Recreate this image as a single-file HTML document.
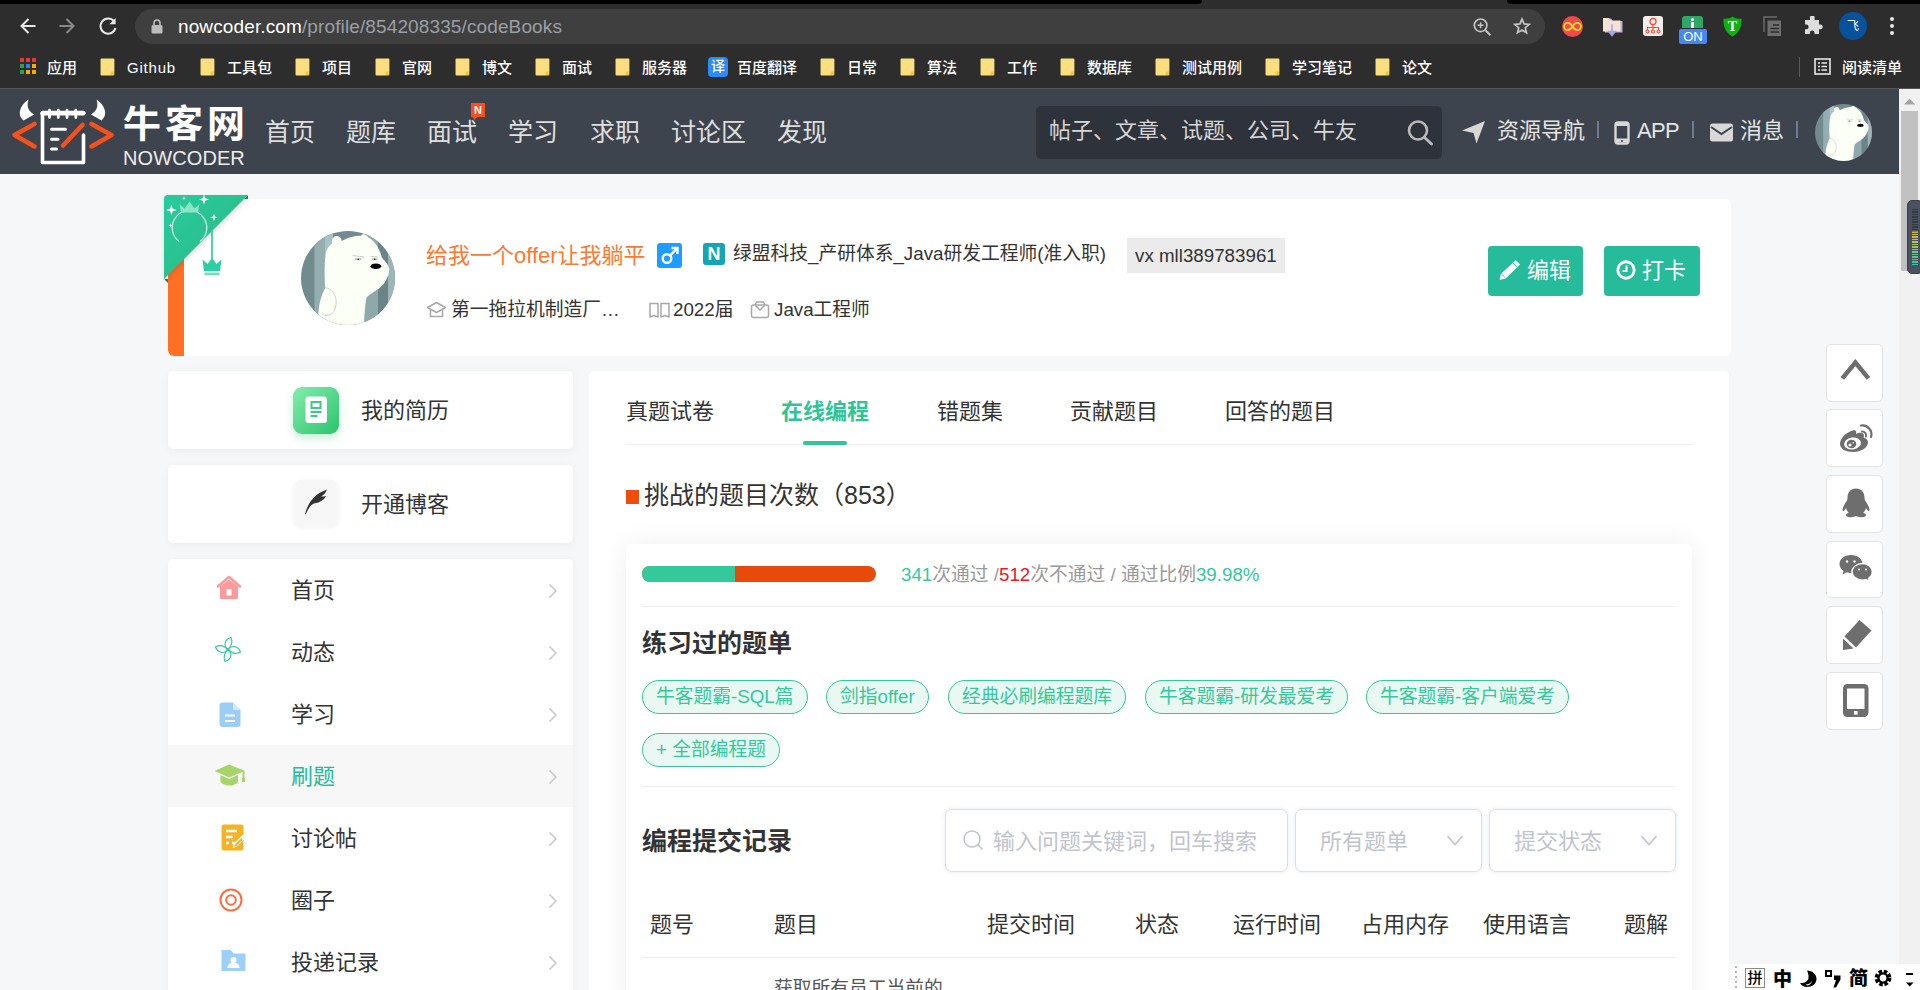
<!DOCTYPE html>
<html lang="zh-CN">
<head>
<meta charset="utf-8">
<title>牛客网</title>
<style>
*{box-sizing:border-box;margin:0;padding:0}
html,body{width:1920px;height:990px;overflow:hidden;background:#f6f7f9;
  font-family:"Liberation Sans","Noto Sans CJK SC",sans-serif;color:#333}
.abs{position:absolute}
.t{position:absolute;white-space:nowrap;line-height:1}
/* ---------- browser chrome ---------- */
#chrome{position:absolute;left:0;top:0;width:1920px;height:89px;background:#2d2d2d}
#chrome .strip{position:absolute;top:0;height:4px;background:#000}
#urlbar{position:absolute;left:135px;top:9px;width:1410px;height:35px;border-radius:18px;background:#3f3f3f}
.bm{position:absolute;top:59px;font-size:15px;color:#fff;line-height:18px;white-space:nowrap;font-weight:500}
.fold{position:absolute;top:58px;width:16px;height:18px}
/* ---------- site header ---------- */
#hdr{position:absolute;left:0;top:89px;width:1899px;height:85px;background:#3e444d}
#hdr .nav{position:absolute;top:28px;font-size:25px;line-height:30px;color:#dedede;white-space:nowrap}
#search{position:absolute;left:1036px;top:17px;width:406px;height:53px;border-radius:5px;background:#2d323b}
/* ---------- profile card ---------- */
#pcard{position:absolute;left:168px;top:199px;width:1563px;height:157px;background:#fff;border-radius:5px}
.ptxt{position:absolute;white-space:nowrap;font-size:18.75px;line-height:24px;color:#333}
.pbtn{position:absolute;top:246px;height:50px;border-radius:4px;background:#25bb9b;color:#fff;font-size:22px;line-height:50px;white-space:nowrap}
/* ---------- sidebar ---------- */
.scard{position:absolute;left:168px;width:405px;background:#fff;border-radius:5px;box-shadow:0 2px 10px rgba(0,0,0,.05)}
.stxt{position:absolute;white-space:nowrap;font-size:22px;line-height:28px;color:#333}
.chev{position:absolute;left:548px;width:10px;height:16px}
/* ---------- main ---------- */
#main{position:absolute;left:589px;top:371px;width:1140px;height:640px;background:#fff;border-radius:5px}
.tab{position:absolute;top:398px;font-size:22px;line-height:28px;color:#333;white-space:nowrap}
#inner{position:absolute;left:626px;top:544px;width:1066px;height:470px;background:#fff;border-radius:5px;box-shadow:0 0 26px rgba(0,0,0,.07)}
.tag{position:absolute;height:34px;border:1px solid #34c99a;border-radius:17px;background:#e9f8f3;color:#34c99a;font-size:18.75px;line-height:31px;padding:0 13px;white-space:nowrap}
.hline{position:absolute;height:1px;background:#eeeeee}
.inp{position:absolute;top:809px;height:63px;border:1px solid #dcdfe6;border-radius:7px;background:#fff;box-shadow:0 0 5px rgba(170,180,205,.28)}
.ph{position:absolute;top:828px;font-size:22px;line-height:28px;color:#c0c4cc;white-space:nowrap}
.th{position:absolute;top:911px;font-size:22px;line-height:28px;color:#333;white-space:nowrap}
.fbox{position:absolute;left:1826px;width:57px;height:57px;background:#fff;border:1px solid #e3e3e3;border-radius:5px}
/* ---------- scrollbar ---------- */
#sb{position:absolute;left:1899px;top:89px;width:21px;height:901px;background:#f1f1f1}
</style>
</head>
<body>
<svg width="0" height="0" style="position:absolute">
  <defs>
    <clipPath id="bc"><circle cx="47" cy="47" r="47"/></clipPath>
    <symbol id="bear" viewBox="0 0 94 94">
      <g clip-path="url(#bc)">
        <rect width="94" height="94" fill="#718b8e"/>
        <rect x="13.500" y="0" width="11" height="94" fill="#93adb1"/>
        <rect x="24" y="0" width="8" height="94" fill="#a9c2c4"/>
        <rect x="63" y="0" width="14" height="94" fill="#8fa8ac"/>
        <rect x="77" y="0" width="10" height="94" fill="#6b8487"/>
        <rect x="87" y="0" width="7" height="94" fill="#9db5b8"/>
        <g transform="scale(0.13134) translate(-160,-158)">
          <path d="M400 250C385 215 420 185 450 200C465 210 470 225 470 235C520 205 580 195 615 195C625 178 655 178 670 205C720 230 760 290 775 360C800 390 835 420 832 455C830 500 800 560 760 590C720 620 680 640 660 665C650 720 645 800 640 880L280 880L300 720C310 660 335 610 345 590C335 500 340 380 350 320C360 290 380 265 400 250Z" fill="#fbfff5"/>
          <path d="M345 590C420 600 450 700 410 770C390 800 350 810 320 790" fill="#fbfff5" stroke="#7f8f8a" stroke-width="3"/>
          <path d="M660 665C650 720 645 800 640 850" fill="none" stroke="#8a9a95" stroke-width="3"/>
          <ellipse cx="730" cy="426" rx="41" ry="21" fill="#050505"/>
          <path d="M552 344L640 356M690 352L748 356" stroke="#9aa39c" stroke-width="4"/>
          <path d="M570 372h50M700 372h40" stroke="#555" stroke-width="5"/>
          <circle cx="596" cy="373" r="6" fill="#222"/><circle cx="722" cy="373" r="6" fill="#222"/>
        </g>
      </g>
    </symbol>
  </defs>
</svg>
<!-- ================= BROWSER CHROME ================= -->
<div id="chrome">
  <div class="strip" style="left:0;width:1202px;border-bottom-right-radius:4px"></div>
  <div class="strip" style="left:1507px;width:413px;border-bottom-left-radius:4px"></div>
  <div id="urlbar"></div>
  <!-- nav arrows -->
  <svg class="abs" style="left:18px;top:16px" width="20" height="20" viewBox="0 0 20 20"><path d="M17.500 10H3.500M10.500 3L3.500 10l7 7" fill="none" stroke="#e8e8e8" stroke-width="2"/></svg>
  <svg class="abs" style="left:57px;top:16px" width="20" height="20" viewBox="0 0 20 20"><path d="M2.500 10h14M9.500 3l7 7-7 7" fill="none" stroke="#8a8a8a" stroke-width="2"/></svg>
  <svg class="abs" style="left:97px;top:15px" width="22" height="22" viewBox="0 0 22 22"><path d="M17 6.2A7.6 7.6 0 1 0 18.5 13" fill="none" stroke="#e8e8e8" stroke-width="2"/><path d="M18.6 3v6.2h-6.2z" fill="#e8e8e8"/></svg>
  <!-- lock -->
  <svg class="abs" style="left:151px;top:19px" width="12" height="15" viewBox="0 0 12 15"><rect x="0.5" y="6" width="11" height="8.5" rx="1.5" fill="#bdbdbd"/><path d="M3 6V4a3 3 0 0 1 6 0v2" fill="none" stroke="#bdbdbd" stroke-width="1.6"/></svg>
  <div class="t" style="left:178px;top:15px;font-size:19px;line-height:23px;color:#fff;letter-spacing:0.12px">nowcoder.com<span style="color:#9aa0a6">/profile/854208335/codeBooks</span></div>
  <!-- toolbar right icons -->
  <svg class="abs" style="left:1470px;top:15px" width="24" height="24" viewBox="0 0 24 24"><circle cx="10.6" cy="10.3" r="6.3" fill="none" stroke="#c4c4c4" stroke-width="1.7"/><path d="M15.2 15l5.2 5.2" stroke="#c4c4c4" stroke-width="2"/><path d="M7.6 10.3h6M10.6 7.3v6" stroke="#c4c4c4" stroke-width="1.5"/></svg>
  <svg class="abs" style="left:1513px;top:17px" width="18" height="18" viewBox="0 0 22 22"><path d="M11 2.6l2.5 5.9 6.3.5-4.8 4.1 1.5 6.2L11 16l-5.5 3.3L7 13.100 2.200 9l6.300-.5z" fill="none" stroke="#c4c4c4" stroke-width="2.100" stroke-linejoin="miter"/></svg>
  <div class="abs" style="left:1562px;top:16px;width:21px;height:21px;border-radius:50%;background:#f24a4a"></div>
  <svg class="abs" style="left:1562px;top:16px" width="21" height="21" viewBox="0 0 21 21"><path d="M10.500 10.500C9 8 7.500 6.800 5.800 6.800a3.700 3.700 0 0 0 0 7.400C7.500 14.200 9 13 10.500 10.500S13.500 6.800 15.200 6.800a3.700 3.700 0 0 1 0 7.400C13.500 14.200 12 13 10.500 10.500z" fill="none" stroke="#ffe21f" stroke-width="1.700"/></svg>
  <svg class="abs" style="left:1602px;top:15px" width="22" height="23" viewBox="0 0 22 23"><path d="M3 3.500h6l2 2.500h9.500v11.500H3z" fill="#c3a9cc"/><path d="M1 3h6l2 2.500h9.500v11H1z" fill="#f3e3d6"/><path d="M10 9.500v10M6.800 16.500l3.200 4 3.200-4z" fill="#a8a6e0" stroke="#a8a6e0" stroke-width="1.600"/></svg>
  <div class="abs" style="left:1643px;top:16px;width:20px;height:20px;border-radius:3px;background:#f3efee"></div>
  <svg class="abs" style="left:1643px;top:16px" width="20" height="20" viewBox="0 0 20 20"><circle cx="10" cy="5.500" r="3" fill="none" stroke="#f0502a" stroke-width="1.300"/><path d="M10 8.500v3M4.500 14v-2.500h11V14M10 11.500V14" fill="none" stroke="#f0502a" stroke-width="1.200"/><circle cx="4.500" cy="15.500" r="1.500" fill="none" stroke="#f0502a" stroke-width="1.100"/><circle cx="10" cy="15.500" r="1.500" fill="none" stroke="#f0502a" stroke-width="1.100"/><circle cx="15.500" cy="15.500" r="1.500" fill="none" stroke="#f0502a" stroke-width="1.100"/></svg>
  <div class="abs" style="left:1682px;top:16px;width:21px;height:12px;border-radius:3px 3px 0 0;background:#2fa866"></div>
  <div class="abs" style="left:1691px;top:18px;width:3px;height:3px;border-radius:50%;background:#fff"></div>
  <div class="abs" style="left:1691px;top:22px;width:3px;height:6px;background:#fff"></div>
  <div class="abs" style="left:1679px;top:29px;width:28px;height:15px;border-radius:2px;background:#4688f1;color:#fff;font-size:13px;line-height:15px;text-align:center">ON</div>
  <svg class="abs" style="left:1722px;top:16px" width="21" height="21" viewBox="0 0 21 21"><path d="M10.500 0.500C8 2.500 4.500 3 1.500 2.500C1 10 3.500 17 10.500 20.500C17.500 17 20 10 19.500 2.500C16.500 3 13 2.500 10.500 0.500z" fill="#10b010"/><text x="10.500" y="15" font-family="Liberation Serif,serif" font-weight="bold" font-size="14" fill="#fff" text-anchor="middle">T</text></svg>
  <svg class="abs" style="left:1763px;top:16px" width="20" height="21" viewBox="0 0 20 21"><path d="M1 16V1h13" fill="none" stroke="#6e6e6e" stroke-width="1.400"/><rect x="4.500" y="4.500" width="13.500" height="15.500" fill="#6e6e6e"/><path d="M10 9h6M7.500 12.500h8.500M7.500 16h8.500" stroke="#2d2d2d" stroke-width="1.600"/></svg>
  <svg class="abs" style="left:1802px;top:16px" width="21" height="21" viewBox="0 0 21 21"><path d="M8 1.500a2.300 2.300 0 0 1 4.600 0V4H17v4.500h1.300a2.400 2.400 0 0 1 0 4.800H17V18h-4.500v-1.300a2.300 2.300 0 0 0-4.600 0V18H3v-4.800h1.300a2.300 2.300 0 0 0 0-4.600H3V4h5z" fill="#dcdcdc"/></svg>
  <div class="abs" style="left:1839px;top:12px;width:28px;height:28px;border-radius:50%;background:#07529a;color:#fff;font-size:12px;line-height:28px;text-align:center">飞</div>
  <div class="abs" style="left:1890px;top:17px;width:4px;height:4px;border-radius:50%;background:#e8e8e8;box-shadow:0 7px 0 #e8e8e8,0 14px 0 #e8e8e8"></div>
  <!-- bookmarks bar -->
  <div class="abs" style="left:0;top:88px;width:1920px;height:1px;background:#555"></div>
  <svg class="abs" style="left:20px;top:58px" width="17" height="17" viewBox="0 0 17 17">
    <rect x="0" y="0" width="4" height="4" fill="#e53935"/><rect x="6" y="0" width="4" height="4" fill="#e53935"/><rect x="12" y="0" width="4" height="4" fill="#e53935"/>
    <rect x="0" y="6" width="4" height="4" fill="#2e9e4f"/><rect x="6" y="6" width="4" height="4" fill="#2a85ea"/><rect x="12" y="6" width="4" height="4" fill="#f9ab00"/>
    <rect x="0" y="12" width="4" height="4" fill="#2e9e4f"/><rect x="6" y="12" width="4" height="4" fill="#f9ab00"/><rect x="12" y="12" width="4" height="4" fill="#f9ab00"/>
  </svg>
  <div class="bm" style="left:47px">应用</div>
  <svg preserveAspectRatio="none" class="fold" style="left:100px" viewBox="0 0 15 18"><path d="M1.5 0.5h11a1 1 0 0 1 1 1v12l-3.5 4H1.5a1 1 0 0 1-1-1v-15a1 1 0 0 1 1-1z" fill="#fbdf7e"/><path d="M10 17.5v-3a1 1 0 0 1 1-1h2.5v3a1 1 0 0 1-1 1z" fill="#f2c744"/></svg>
  <div class="bm" style="left:127px;letter-spacing:0.8px">Github</div>
  <svg preserveAspectRatio="none" class="fold" style="left:200px" viewBox="0 0 15 18"><path d="M1.5 0.5h11a1 1 0 0 1 1 1v12l-3.5 4H1.5a1 1 0 0 1-1-1v-15a1 1 0 0 1 1-1z" fill="#fbdf7e"/><path d="M10 17.5v-3a1 1 0 0 1 1-1h2.5v3a1 1 0 0 1-1 1z" fill="#f2c744"/></svg>
  <div class="bm" style="left:227px">工具包</div>
  <svg preserveAspectRatio="none" class="fold" style="left:295px" viewBox="0 0 15 18"><path d="M1.5 0.5h11a1 1 0 0 1 1 1v12l-3.5 4H1.5a1 1 0 0 1-1-1v-15a1 1 0 0 1 1-1z" fill="#fbdf7e"/><path d="M10 17.5v-3a1 1 0 0 1 1-1h2.5v3a1 1 0 0 1-1 1z" fill="#f2c744"/></svg>
  <div class="bm" style="left:322px">项目</div>
  <svg preserveAspectRatio="none" class="fold" style="left:375px" viewBox="0 0 15 18"><path d="M1.5 0.5h11a1 1 0 0 1 1 1v12l-3.5 4H1.5a1 1 0 0 1-1-1v-15a1 1 0 0 1 1-1z" fill="#fbdf7e"/><path d="M10 17.5v-3a1 1 0 0 1 1-1h2.5v3a1 1 0 0 1-1 1z" fill="#f2c744"/></svg>
  <div class="bm" style="left:402px">官网</div>
  <svg preserveAspectRatio="none" class="fold" style="left:455px" viewBox="0 0 15 18"><path d="M1.5 0.5h11a1 1 0 0 1 1 1v12l-3.5 4H1.5a1 1 0 0 1-1-1v-15a1 1 0 0 1 1-1z" fill="#fbdf7e"/><path d="M10 17.5v-3a1 1 0 0 1 1-1h2.5v3a1 1 0 0 1-1 1z" fill="#f2c744"/></svg>
  <div class="bm" style="left:482px">博文</div>
  <svg preserveAspectRatio="none" class="fold" style="left:535px" viewBox="0 0 15 18"><path d="M1.5 0.5h11a1 1 0 0 1 1 1v12l-3.5 4H1.5a1 1 0 0 1-1-1v-15a1 1 0 0 1 1-1z" fill="#fbdf7e"/><path d="M10 17.5v-3a1 1 0 0 1 1-1h2.5v3a1 1 0 0 1-1 1z" fill="#f2c744"/></svg>
  <div class="bm" style="left:562px">面试</div>
  <svg preserveAspectRatio="none" class="fold" style="left:615px" viewBox="0 0 15 18"><path d="M1.5 0.5h11a1 1 0 0 1 1 1v12l-3.5 4H1.5a1 1 0 0 1-1-1v-15a1 1 0 0 1 1-1z" fill="#fbdf7e"/><path d="M10 17.5v-3a1 1 0 0 1 1-1h2.5v3a1 1 0 0 1-1 1z" fill="#f2c744"/></svg>
  <div class="bm" style="left:642px">服务器</div>
  <div class="bm" style="left:737px">百度翻译</div>
  <svg preserveAspectRatio="none" class="fold" style="left:820px" viewBox="0 0 15 18"><path d="M1.5 0.5h11a1 1 0 0 1 1 1v12l-3.5 4H1.5a1 1 0 0 1-1-1v-15a1 1 0 0 1 1-1z" fill="#fbdf7e"/><path d="M10 17.5v-3a1 1 0 0 1 1-1h2.5v3a1 1 0 0 1-1 1z" fill="#f2c744"/></svg>
  <div class="bm" style="left:847px">日常</div>
  <svg preserveAspectRatio="none" class="fold" style="left:900px" viewBox="0 0 15 18"><path d="M1.5 0.5h11a1 1 0 0 1 1 1v12l-3.5 4H1.5a1 1 0 0 1-1-1v-15a1 1 0 0 1 1-1z" fill="#fbdf7e"/><path d="M10 17.5v-3a1 1 0 0 1 1-1h2.5v3a1 1 0 0 1-1 1z" fill="#f2c744"/></svg>
  <div class="bm" style="left:927px">算法</div>
  <svg preserveAspectRatio="none" class="fold" style="left:980px" viewBox="0 0 15 18"><path d="M1.5 0.5h11a1 1 0 0 1 1 1v12l-3.5 4H1.5a1 1 0 0 1-1-1v-15a1 1 0 0 1 1-1z" fill="#fbdf7e"/><path d="M10 17.5v-3a1 1 0 0 1 1-1h2.5v3a1 1 0 0 1-1 1z" fill="#f2c744"/></svg>
  <div class="bm" style="left:1007px">工作</div>
  <svg preserveAspectRatio="none" class="fold" style="left:1060px" viewBox="0 0 15 18"><path d="M1.5 0.5h11a1 1 0 0 1 1 1v12l-3.5 4H1.5a1 1 0 0 1-1-1v-15a1 1 0 0 1 1-1z" fill="#fbdf7e"/><path d="M10 17.5v-3a1 1 0 0 1 1-1h2.5v3a1 1 0 0 1-1 1z" fill="#f2c744"/></svg>
  <div class="bm" style="left:1087px">数据库</div>
  <svg preserveAspectRatio="none" class="fold" style="left:1155px" viewBox="0 0 15 18"><path d="M1.5 0.5h11a1 1 0 0 1 1 1v12l-3.5 4H1.5a1 1 0 0 1-1-1v-15a1 1 0 0 1 1-1z" fill="#fbdf7e"/><path d="M10 17.5v-3a1 1 0 0 1 1-1h2.5v3a1 1 0 0 1-1 1z" fill="#f2c744"/></svg>
  <div class="bm" style="left:1182px">测试用例</div>
  <svg preserveAspectRatio="none" class="fold" style="left:1265px" viewBox="0 0 15 18"><path d="M1.5 0.5h11a1 1 0 0 1 1 1v12l-3.5 4H1.5a1 1 0 0 1-1-1v-15a1 1 0 0 1 1-1z" fill="#fbdf7e"/><path d="M10 17.5v-3a1 1 0 0 1 1-1h2.5v3a1 1 0 0 1-1 1z" fill="#f2c744"/></svg>
  <div class="bm" style="left:1292px">学习笔记</div>
  <svg preserveAspectRatio="none" class="fold" style="left:1375px" viewBox="0 0 15 18"><path d="M1.5 0.5h11a1 1 0 0 1 1 1v12l-3.5 4H1.5a1 1 0 0 1-1-1v-15a1 1 0 0 1 1-1z" fill="#fbdf7e"/><path d="M10 17.5v-3a1 1 0 0 1 1-1h2.5v3a1 1 0 0 1-1 1z" fill="#f2c744"/></svg>
  <div class="bm" style="left:1402px">论文</div>
  <div class="abs" style="left:708px;top:57px;width:20px;height:20px;border-radius:4px;background:#2b8cf7;color:#fff;font-size:14px;line-height:19px;text-align:center;font-weight:500">译</div>
  <div class="abs" style="left:1799px;top:57px;width:1px;height:20px;background:#5a5a5a"></div>
  <svg class="abs" style="left:1814px;top:58px" width="17" height="17" viewBox="0 0 17 17"><rect x="1" y="1" width="15" height="15" fill="none" stroke="#e8e8e8" stroke-width="1.6"/><path d="M4 5h2M7.5 5h5.5M4 8.5h2M7.5 8.5h5.5M4 12h2M7.5 12h5.5" stroke="#e8e8e8" stroke-width="1.6"/></svg>
  <div class="bm" style="left:1842px">阅读清单</div>
</div>

<!-- ================= SITE HEADER ================= -->
<div id="hdr">
  <!-- logo -->
  <svg class="abs" style="left:10px;top:8px" width="108" height="70" viewBox="0 0 108 70">
    <path d="M18.500 2.500C8 10 8 19 13.500 23.500L24 17.500C18 14 16.500 9 18.500 2.500z" fill="#fff"/>
    <path d="M86.500 2.500C97 10 97 19 91.500 23.500L81 17.500C87 14 88.500 9 86.500 2.500z" fill="#fff"/>
    <path d="M73.500 38V65.500H32.500V15.500H73.500" fill="none" stroke="#fff" stroke-width="3.600" stroke-linejoin="round" stroke-linecap="round"/>
    <path d="M39.500 13.200v7.300M48.300 13.200v7.300M57 13.200v7.300M65.800 13.200v7.300" stroke="#fff" stroke-width="2.800" stroke-linecap="round"/><path d="M32.500 16.200h41" stroke="#fff" stroke-width="4.400" stroke-linecap="round"/>
    <path d="M41.500 32.200h14M41.500 42.300h6.500M41.500 52h5" stroke="#fff" stroke-width="3" stroke-linecap="round"/>
    <path d="M72.500 28L53 48.500" stroke="#f4511e" stroke-width="4.600" stroke-linecap="round"/>
    <path d="M24.500 26.900L4.500 37.900l20 11.500" fill="none" stroke="#f4511e" stroke-width="4.600" stroke-linecap="round" stroke-linejoin="round"/>
    <path d="M81.500 26.900L101.500 37.900l-20 11.500" fill="none" stroke="#f4511e" stroke-width="4.600" stroke-linecap="round" stroke-linejoin="round"/>
  </svg>
  <div class="t" style="left:123px;top:14px;font-size:38px;line-height:42px;color:#fff;font-weight:700;letter-spacing:4px">牛客网</div>
  <div class="t" style="left:123px;top:59px;font-size:20px;line-height:20px;color:#ececec;letter-spacing:0.1px">NOWCODER</div>
  <!-- nav -->
  <div class="nav" style="left:265px">首页</div>
  <div class="nav" style="left:346px">题库</div>
  <div class="nav" style="left:427px">面试</div>
  <div class="nav" style="left:508px">学习</div>
  <div class="nav" style="left:590px">求职</div>
  <div class="nav" style="left:671px">讨论区</div>
  <div class="nav" style="left:777px">发现</div>
  <div class="abs" style="left:471px;top:14px;width:14px;height:14px;background:#f4511e;color:#fff;font-size:11px;font-weight:bold;line-height:14px;text-align:center">N</div>
  <svg class="abs" style="left:473px;top:28px" width="5" height="3" viewBox="0 0 5 3"><path d="M0 0h4.500L1 3z" fill="#f4511e"/></svg>
  <!-- search -->
  <div id="search"></div>
  <div class="t" style="left:1049px;top:29px;font-size:22px;line-height:26px;color:#d6d6d6">帖子、文章、试题、公司、牛友</div>
  <svg class="abs" style="left:1405px;top:28px" width="30" height="30" viewBox="0 0 30 30"><circle cx="13" cy="13.500" r="9" fill="none" stroke="#b9b9b9" stroke-width="2.600"/><path d="M19.500 20.500l7 6.500" stroke="#b9b9b9" stroke-width="3" stroke-linecap="round"/></svg>
  <!-- right links -->
  <svg class="abs" style="left:1461px;top:31px" width="25" height="24" viewBox="0 0 25 24"><path d="M1 10.500L24 1 15.500 23.500 12.500 13z" fill="#d8d8d8"/></svg>
  <div class="t" style="left:1497px;top:29px;font-size:22px;line-height:26px;color:#e4e4e4">资源导航</div>
  <div class="abs" style="left:1597px;top:32px;width:2px;height:17px;background:#6f7c90"></div>
  <svg class="abs" style="left:1614px;top:32px" width="16" height="24" viewBox="0 0 16 24"><rect x="1.500" y="1.500" width="13" height="21" rx="2.500" fill="none" stroke="#d8d8d8" stroke-width="2.400"/><rect x="2" y="2" width="12" height="3" fill="#d8d8d8"/><rect x="2" y="17.500" width="12" height="4" fill="#d8d8d8"/><circle cx="8" cy="20" r="1.100" fill="#3e444d"/></svg>
  <div class="t" style="left:1637px;top:29px;font-size:22px;line-height:26px;color:#e4e4e4;letter-spacing:-0.7px">APP</div>
  <div class="abs" style="left:1692px;top:32px;width:2px;height:17px;background:#6f7c90"></div>
  <svg class="abs" style="left:1710px;top:34px" width="23" height="19" viewBox="0 0 23 19"><rect x="0" y="0.500" width="23" height="18" rx="2.500" fill="#d8d8d8"/><path d="M1 4l10.500 7L22 4" fill="none" stroke="#3e444d" stroke-width="2"/></svg>
  <div class="t" style="left:1740px;top:29px;font-size:22px;line-height:26px;color:#e4e4e4">消息</div>
  <div class="abs" style="left:1796px;top:32px;width:2px;height:17px;background:#6f7c90"></div>
  <svg class="abs" style="left:1815px;top:15px" width="57" height="57" viewBox="0 0 94 94"><use href="#bear"/></svg>
</div>

<!-- ================= PROFILE CARD ================= -->
<div id="pcard"></div>
<div class="abs" style="left:168px;top:205px;width:16px;height:151px;background:#ff7024;border-radius:0 0 0 6px"></div>
<svg class="abs" style="left:160px;top:191px" width="96" height="96" viewBox="0 0 96 96">
  <defs><linearGradient id="gtri" x1="0" y1="0" x2="0.600" y2="0.600"><stop offset="0" stop-color="#27cc9c"/><stop offset="1" stop-color="#2cbf8f"/></linearGradient></defs>
  <path d="M84 8L88 4V8zM4 88h4v4z" fill="#17876a"/>
  <path d="M4 8a4 4 0 0 1 4-4H88L4 88z" fill="url(#gtri)" style="filter:drop-shadow(1px 2px 2.500px rgba(0,0,0,.13))"/>
  <path d="M19 50.500a17.300 17.300 0 1 1 21 0" fill="none" stroke="#e9fff6" stroke-width="1.200" opacity="0.900"/>
  <path d="M19.500 13l5 4.500 5-7 5 7 5-4.500-1.500 8.500h-17z" fill="#8be5c6"/>
  <path d="M11.400 13.500l1.300 4.200 4.200 1.300-4.200 1.300-1.300 4.200-1.300-4.200-4.200-1.300 4.200-1.300z" fill="#fff"/>
  <path d="M44 3.500l1.200 3.800 3.800 1.200-3.800 1.200-1.200 3.800-1.200-3.800-3.800-1.200 3.800-1.200z" fill="#fff"/>
  <path d="M54 22.500l.9 3 3 .9-3 .9-.9 3-.9-3-3-.9 3-.9z" fill="#fff"/>
  <path d="M24 5l.5 1.700 1.700.5-1.700.5-.5 1.700-.5-1.700-1.700-.5 1.700-.5z" fill="#fff"/>
  <path d="M10.500 32l.5 1.700 1.700.5-1.700.5-.5 1.700-.5-1.700-1.700-.5 1.700-.5z" fill="#fff"/>
  <path d="M52 39v30" stroke="#2ccfa0" stroke-width="1.700"/>
  <path d="M42.500 68.500l5 4.500 4.500-6 4.500 6 5-4.500-1.500 11.500h-16z" fill="#2ccfa0"/>
  <rect x="44.500" y="81.500" width="15" height="2.600" fill="#6fe0bd"/>
</svg>
<svg class="abs" style="left:301px;top:231px" width="94" height="94" viewBox="0 0 94 94"><use href="#bear"/></svg>
<div class="t" style="left:426px;top:242px;font-size:22px;line-height:28px;color:#ff7830;letter-spacing:0">给我一个offer让我躺平</div>
<div class="abs" style="left:657px;top:243px;width:25px;height:25px;border-radius:3px;background:#1e9cff"></div>
<svg class="abs" style="left:657px;top:243px" width="25" height="25" viewBox="0 0 25 25"><circle cx="10" cy="15.500" r="4.300" fill="none" stroke="#fff" stroke-width="2.400"/><path d="M13 12.500l7-7M14.500 5h6v6" fill="none" stroke="#fff" stroke-width="2.400"/></svg>
<div class="abs" style="left:703px;top:243px;width:22px;height:22px;border-radius:3px;background:#12a6b6;color:#fff;font-size:18px;font-weight:bold;line-height:22px;text-align:center">N</div>
<div class="ptxt" style="left:733px;top:242px">绿盟科技_产研体系_Java研发工程师(准入职)</div>
<div class="abs" style="left:1127px;top:238px;width:158px;height:35px;background:#ebebeb"></div>
<div class="ptxt" style="left:1135px;top:244px">vx mll389783961</div>
<!-- row 2 -->
<svg class="abs" style="left:426px;top:300px" width="21" height="19" viewBox="0 0 21 19"><path d="M1.500 7.500L10.500 2.500l9 5-9 5z" fill="none" stroke="#a8a8a8" stroke-width="1.500" stroke-linejoin="round"/><path d="M4.500 10v6.500h12V10" fill="none" stroke="#a8a8a8" stroke-width="1.500" stroke-linejoin="round"/></svg>
<div class="ptxt" style="left:451px;top:298px">第一拖拉机制造厂…</div>
<svg class="abs" style="left:649px;top:301px" width="21" height="18" viewBox="0 0 21 18"><path d="M1 2.500h8v13.500l-4-1.500-4 1.500zM12 2.500h8v13.500l-4-1.500-4 1.500z" fill="none" stroke="#a8a8a8" stroke-width="1.500" stroke-linejoin="round"/></svg>
<div class="ptxt" style="left:673px;top:298px">2022届</div>
<svg class="abs" style="left:750px;top:300px" width="20" height="19" viewBox="0 0 20 19"><rect x="1.500" y="5" width="17" height="12.500" rx="2" fill="none" stroke="#a8a8a8" stroke-width="1.500"/><path d="M5 5l1.500-3h7L15 5M5 5l5 5 5-5" fill="none" stroke="#a8a8a8" stroke-width="1.500" stroke-linejoin="round"/></svg>
<div class="ptxt" style="left:774px;top:298px">Java工程师</div>
<!-- buttons -->
<div class="pbtn" style="left:1488px;width:95px"><span style="position:absolute;left:39px">编辑</span></div>
<svg class="abs" style="left:1498px;top:260px" width="22" height="22" viewBox="0 0 22 22"><path d="M17.600 0.600L21.750 4.400 7.600 17.900 2 19.400 3.400 14.100z" fill="#fff" stroke="#fff" stroke-width="1" stroke-linejoin="round"/><path d="M14.900 3.100L19.100 6.900" stroke="#25bb9b" stroke-width="1"/><path d="M4 14.500l3.300 3.100" stroke="#25bb9b" stroke-width="0.800"/></svg>
<div class="pbtn" style="left:1604px;width:96px"><span style="position:absolute;left:38px">打卡</span></div>
<svg class="abs" style="left:1616px;top:260px;overflow:visible" width="20" height="20" viewBox="0 0 20 20"><circle cx="10" cy="10" r="8.200" fill="none" stroke="#fff" stroke-width="2.900"/><path d="M10.500 5.500V11H6.500" fill="none" stroke="#fff" stroke-width="2"/></svg>

<!-- ================= SIDEBAR ================= -->
<div class="scard" style="top:371px;height:78px"></div>
<div class="abs" style="left:293px;top:387px;width:46px;height:47px;border-radius:9px;background:linear-gradient(135deg,#85ecae,#2bc46c);box-shadow:0 4px 8px rgba(60,200,120,.3)"></div>
<svg class="abs" style="left:305px;top:396px" width="23" height="28" viewBox="0 0 23 28"><rect x="0.500" y="0.500" width="21.500" height="26.500" rx="3" fill="#fff"/><rect x="6.500" y="6" width="9" height="6" fill="none" stroke="#3ccb86" stroke-width="2"/><path d="M5.500 16h11M5.500 20h7" stroke="#3ccb86" stroke-width="2"/></svg>
<div class="stxt" style="left:361px;top:397px">我的简历</div>
<div class="scard" style="top:465px;height:78px"></div>
<div class="abs" style="left:293px;top:480px;width:46px;height:47px;border-radius:9px;background:#f7f7f7;box-shadow:0 1px 4px rgba(0,0,0,.05)"></div>
<svg class="abs" style="left:303px;top:488px" width="26" height="28" viewBox="0 0 26 28"><path d="M2 26C5 15 11 6 24 1.500C22.500 5 21 7 18 8.500C20 8.500 21.500 8.500 23 8C21 12 17 14.500 13 15C10 15.500 8 17 6 20C4.500 22.500 3.500 24.500 3 26z" fill="#333"/></svg>
<div class="stxt" style="left:361px;top:491px">开通博客</div>
<div class="scard" style="top:559px;height:450px"></div>
<div class="abs" style="left:168px;top:745px;width:405px;height:62px;background:#f7f7f7"></div>
<!-- menu icons -->
<svg class="abs" style="left:215px;top:575px" width="28" height="25" viewBox="0 0 28 25"><path d="M3 11.500L14 2 25 11.500" fill="none" stroke="#fa9a9c" stroke-width="2.600" stroke-linejoin="round" stroke-linecap="round"/><path d="M5 11.500L14 4.500l9 7V23a1 1 0 0 1-1 1H6a1 1 0 0 1-1-1z" fill="#fa9a9c"/><rect x="11.500" y="14" width="5" height="6.500" fill="#fff"/></svg>
<svg class="abs" style="left:214px;top:636px" width="28" height="27" viewBox="0 0 28 27"><g fill="none" stroke="#2cc4a0" stroke-width="1.100"><path d="M13.500 13C9 9 11 3 17 1.500C19 6 17.500 11 13.500 13z"/><path d="M14.500 13C18 8.500 24.500 10.500 26.500 16C22 18.500 17 17.500 14.500 13z"/><path d="M14.500 14C19 18 17 24 11 25.500C9 21 10.500 16 14.500 14z"/><path d="M13.500 14C10 18.500 3.500 16.500 1.500 11C6 8.500 11 9.500 13.500 14z"/></g></svg>
<svg class="abs" style="left:219px;top:702px" width="22" height="26" viewBox="0 0 22 26"><path d="M3.500 0.500H14L21.500 8V22a3 3 0 0 1-3 3h-15a3 3 0 0 1-3-3V3.500a3 3 0 0 1 3-3z" fill="#9ccdf7"/><path d="M14 0.500V8h7.500z" fill="#d4e9fb"/><path d="M6 13.500h10M6 19h10" stroke="#fff" stroke-width="2.200"/></svg>
<svg class="abs" style="left:214px;top:763px" width="33" height="25" viewBox="0 0 33 25"><path d="M0.500 8L15 1.500 31 8 15 14.500z" fill="#a6d468"/><path d="M6.500 12v7c3 4.500 14.500 4.500 17.500 0v-7L15 16z" fill="#a6d468"/><path d="M29.500 8.500v8" stroke="#a6d468" stroke-width="2"/><rect x="28" y="15" width="3" height="4" fill="#a6d468"/></svg>
<svg class="abs" style="left:221px;top:824px" width="23" height="27" viewBox="0 0 23 27"><path d="M3 0.500h17a2.500 2.500 0 0 1 2.500 2.500v21a2.500 2.500 0 0 1-2.500 2.500H3a2.500 2.500 0 0 1-2.500-2.500V3A2.500 2.500 0 0 1 3 0.500z" fill="#f5b324"/><path d="M5 7h11M5 13h7M5 19h3M11 19h3" stroke="#fff" stroke-width="2.400"/><path d="M22.500 10L13 19.500 11.500 24l4.500-1.500 6.500-6.500z" fill="#fff"/><path d="M21 13.500l-7 7-1 2.500 2.500-1 5.500-5.500z" fill="#f5b324"/></svg>
<svg class="abs" style="left:218px;top:887px" width="26" height="26" viewBox="0 0 26 26"><circle cx="13" cy="13" r="10.500" fill="none" stroke="#fa6e40" stroke-width="2"/><circle cx="13" cy="13" r="4.800" fill="none" stroke="#fa6e40" stroke-width="2"/></svg>
<svg class="abs" style="left:221px;top:949px" width="25" height="23" viewBox="0 0 25 23"><path d="M0.500 1h9l3 3.500H24.500V22H0.500z" fill="#9cd0f7"/><circle cx="12.500" cy="11" r="3" fill="#fff"/><path d="M6.500 19c0-4 3-5.500 6-5.500s6 1.500 6 5.500z" fill="#fff"/></svg>
<!-- menu texts -->
<div class="stxt" style="left:291px;top:577px">首页</div>
<div class="stxt" style="left:291px;top:639px">动态</div>
<div class="stxt" style="left:291px;top:701px">学习</div>
<div class="stxt" style="left:291px;top:763px;color:#25bb9b">刷题</div>
<div class="stxt" style="left:291px;top:825px">讨论帖</div>
<div class="stxt" style="left:291px;top:887px">圈子</div>
<div class="stxt" style="left:291px;top:949px">投递记录</div>
<svg class="chev" style="top:583px" viewBox="0 0 10 16"><path d="M1.500 1.500L8 8l-6.500 6.500" fill="none" stroke="#c8c8c8" stroke-width="1.500"/></svg>
<svg class="chev" style="top:645px" viewBox="0 0 10 16"><path d="M1.500 1.500L8 8l-6.500 6.500" fill="none" stroke="#c8c8c8" stroke-width="1.500"/></svg>
<svg class="chev" style="top:707px" viewBox="0 0 10 16"><path d="M1.500 1.500L8 8l-6.500 6.500" fill="none" stroke="#c8c8c8" stroke-width="1.500"/></svg>
<svg class="chev" style="top:769px" viewBox="0 0 10 16"><path d="M1.500 1.500L8 8l-6.500 6.500" fill="none" stroke="#c8c8c8" stroke-width="1.500"/></svg>
<svg class="chev" style="top:831px" viewBox="0 0 10 16"><path d="M1.500 1.500L8 8l-6.500 6.500" fill="none" stroke="#c8c8c8" stroke-width="1.500"/></svg>
<svg class="chev" style="top:893px" viewBox="0 0 10 16"><path d="M1.500 1.500L8 8l-6.500 6.500" fill="none" stroke="#c8c8c8" stroke-width="1.500"/></svg>
<svg class="chev" style="top:955px" viewBox="0 0 10 16"><path d="M1.500 1.500L8 8l-6.500 6.500" fill="none" stroke="#c8c8c8" stroke-width="1.500"/></svg>

<!-- ================= MAIN ================= -->
<div id="main"></div>
<div class="tab" style="left:626px">真题试卷</div>
<div class="tab" style="left:781px;color:#2fc595;font-weight:bold">在线编程</div>
<div class="tab" style="left:937px">错题集</div>
<div class="tab" style="left:1070px">贡献题目</div>
<div class="tab" style="left:1225px">回答的题目</div>
<div class="hline" style="left:626px;top:444px;width:1066px"></div>
<div class="abs" style="left:803px;top:441px;width:44px;height:4px;border-radius:2px;background:#2fc595"></div>
<div class="abs" style="left:626px;top:490px;width:13px;height:14px;background:#ee4d0b"></div>
<div class="t" style="left:644px;top:479px;font-size:25px;line-height:32px;color:#333">挑战的题目次数（853）</div>
<div id="inner"></div>
<div class="abs" style="left:642px;top:566px;width:234px;height:16px;border-radius:8px;background:#e84a0c;overflow:hidden"><div style="width:93px;height:16px;background:#34c99a"></div></div>
<div class="t" style="left:901px;top:562.5px;font-size:18.75px;line-height:24px;color:#999"><span style="color:#34c99a">341</span>次通过 /<span style="color:#f0141e">512</span>次不通过 / 通过比例<span style="color:#34c99a">39.98%</span></div>
<div class="hline" style="left:642px;top:606px;width:1033px"></div>
<div class="t" style="left:642px;top:627px;font-size:25px;line-height:32px;color:#333;font-weight:bold">练习过的题单</div>
<div class="tag" style="left:642px;top:680px">牛客题霸-SQL篇</div>
<div class="tag" style="left:826px;top:680px">剑指offer</div>
<div class="tag" style="left:948px;top:680px">经典必刷编程题库</div>
<div class="tag" style="left:1145px;top:680px">牛客题霸-研发最爱考</div>
<div class="tag" style="left:1366px;top:680px">牛客题霸-客户端爱考</div>
<div class="tag" style="left:642px;top:733px">+ 全部编程题</div>
<div class="hline" style="left:642px;top:786px;width:1033px"></div>
<div class="t" style="left:642px;top:825px;font-size:25px;line-height:32px;color:#333;font-weight:bold">编程提交记录</div>
<div class="inp" style="left:945px;width:343px"></div>
<svg class="abs" style="left:961px;top:828px" width="24" height="24" viewBox="0 0 24 24"><circle cx="11" cy="11" r="8" fill="none" stroke="#c0c4cc" stroke-width="1.500"/><path d="M17 17l4 4" stroke="#c0c4cc" stroke-width="1.500" stroke-linecap="round"/></svg>
<div class="ph" style="left:993px">输入问题关键词，回车搜索</div>
<div class="inp" style="left:1295px;width:187px"></div>
<div class="ph" style="left:1320px">所有题单</div>
<svg class="abs" style="left:1446px;top:834px" width="18" height="13" viewBox="0 0 18 13"><path d="M1.500 2l7.500 8.500L16.500 2" fill="none" stroke="#c0c4cc" stroke-width="1.500"/></svg>
<div class="inp" style="left:1489px;width:187px"></div>
<div class="ph" style="left:1514px">提交状态</div>
<svg class="abs" style="left:1640px;top:834px" width="18" height="13" viewBox="0 0 18 13"><path d="M1.500 2l7.500 8.500L16.500 2" fill="none" stroke="#c0c4cc" stroke-width="1.500"/></svg>
<div class="th" style="left:650px">题号</div>
<div class="th" style="left:774px">题目</div>
<div class="th" style="left:987px">提交时间</div>
<div class="th" style="left:1135px">状态</div>
<div class="th" style="left:1233px">运行时间</div>
<div class="th" style="left:1361px">占用内存</div>
<div class="th" style="left:1483px">使用语言</div>
<div class="th" style="left:1624px">题解</div>
<div class="hline" style="left:642px;top:957px;width:1034px"></div>
<div class="t" style="left:774px;top:976.5px;font-size:18.75px;line-height:24px;color:#555">获取所有员工当前的</div>

<!-- ================= FLOAT TOOLBAR ================= -->
<div class="fbox" style="top:344px;height:58px"></div>
<div class="fbox" style="top:409px;height:58px"></div>
<div class="fbox" style="top:475px;height:58px"></div>
<div class="fbox" style="top:541px"></div>
<div class="fbox" style="top:606px;height:58px"></div>
<div class="fbox" style="top:672px;height:58px"></div>
<svg class="abs" style="left:1838px;top:356px" width="34" height="28" viewBox="0 0 34 28"><path d="M4.300 22.400L17.400 6.500 30.500 22.400" fill="none" stroke="#6e6e6e" stroke-width="4.600" stroke-linejoin="miter"/></svg>
<svg class="abs" style="left:1838px;top:422px" width="36" height="32" viewBox="0 0 36 32">
  <path d="M14.500 8.500C9 10 2 16 2 22c0 5 6 8 13 8 8 0 15-4.500 15-9.500 0-3-2.500-4.500-4.500-5 .8-1.500.8-3.500-1-4.300-1.800-.8-4.500-.2-6.500.8.600-2 .5-4.500-3.500-3.500z" fill="#6e6e6e"/>
  <ellipse cx="14.500" cy="21.500" rx="8.500" ry="6" fill="#fff" transform="rotate(-8 14.500 21.500)"/>
  <ellipse cx="13.500" cy="22" rx="4.800" ry="4.200" fill="#6e6e6e"/>
  <circle cx="12" cy="23" r="1.500" fill="#fff"/><circle cx="15.200" cy="20.800" r=".8" fill="#fff"/>
  <path d="M24 9.500a4 4 0 0 1 4 5" fill="none" stroke="#6e6e6e" stroke-width="2" stroke-linecap="round"/>
  <path d="M23 3.500a9 9 0 0 1 10 11.500" fill="none" stroke="#6e6e6e" stroke-width="2.200" stroke-linecap="round"/>
</svg>
<svg class="abs" style="left:1840px;top:487px" width="32" height="32" viewBox="0 0 32 32">
  <path d="M16 1.500c-5.500 0-8.500 4-8.500 9 0 1-.1 2-.5 3-2 3-4.500 6.500-4.500 9.500 0 1.500.8 1.500 1.500.8.700-.7 1.500-1.800 2-2.800.5 2 1.500 3.500 2.800 4.800-1.500.6-2.800 1.300-2.800 2.500 0 1.500 2.500 2 5 2 2.300 0 4-.5 5-1.200 1 .7 2.700 1.200 5 1.200 2.500 0 5-.5 5-2 0-1.200-1.300-1.900-2.800-2.500 1.300-1.300 2.300-2.800 2.800-4.800.5 1 1.300 2.100 2 2.800.7.700 1.500.7 1.500-.8 0-3-2.500-6.500-4.500-9.500-.4-1-.5-2-.5-3 0-5-3-9-8.500-9z" fill="#6e6e6e"/>
</svg>
<svg class="abs" style="left:1838px;top:553px" width="36" height="32" viewBox="0 0 36 32">
  <path d="M13 2C6.500 2 1.500 6 1.500 11c0 2.800 1.500 5.200 4 6.900L4.500 21.500l4-2.200c1.400.4 2.900.7 4.500.7 6.500 0 11.500-4 11.500-9S19.500 2 13 2z" fill="#6e6e6e"/>
  <path d="M24.500 10.500c-6 0-10.500 3.800-10.500 8.300s4.500 8.300 10.500 8.300c1.200 0 2.400-.2 3.500-.5l3.500 1.900-1-3.100c2.300-1.500 3.800-3.900 3.800-6.600 0-4.500-4.300-8.300-9.800-8.300z" fill="#6e6e6e" stroke="#fff" stroke-width="1.400"/>
  <circle cx="9" cy="8.500" r="1.200" fill="#fff"/><circle cx="16.500" cy="8.500" r="1.200" fill="#fff"/>
  <circle cx="21" cy="16.500" r="1.100" fill="#fff"/><circle cx="28" cy="16.500" r="1.100" fill="#fff"/>
</svg>
<svg class="abs" style="left:1841px;top:618px" width="34" height="34" viewBox="0 0 34 34">
  <path d="M18.500 2L30.500 12.500 15 29.500 3.500 18.500z" fill="#6e6e6e"/>
  <path d="M2 20.500L12.500 30.500 2 32z" fill="#6e6e6e"/>
</svg>
<svg class="abs" style="left:1842px;top:683px" width="28" height="36" viewBox="0 0 28 36">
  <rect x="1" y="1" width="25.500" height="33" rx="4.500" fill="#6e6e6e"/>
  <rect x="5" y="5.500" width="17.500" height="20.500" fill="#fff"/>
  <rect x="12" y="28" width="3.600" height="3.600" fill="#fff"/>
</svg>

<!-- ================= SCROLLBAR ================= -->
<div id="sb">
  <svg class="abs" style="left:5px;top:9px" width="11" height="7" viewBox="0 0 11 7"><path d="M0 6.500L5.500 0.500 11 6.500z" fill="#a3a3a3"/></svg>
  <div class="abs" style="left:2px;top:22px;width:17px;height:160px;background:#c1c1c1"></div>
</div>
<div class="abs" style="left:1907px;top:200px;width:16px;height:74px;border-radius:5px;background:#4b5160;border:1px solid #3a3f4c"></div>
<div class="abs" style="left:1912px;top:209px;width:6px;height:56px;background:repeating-linear-gradient(to bottom,rgba(0,0,0,0) 0,rgba(0,0,0,0) 1.500px,#4b5160 1.500px,#4b5160 2.500px),linear-gradient(to bottom,#343945 0,#343945 39%,#d0b83c 41%,#b9c84a 58%,#6cc878 78%,#2cc8b0 100%)"></div>
<!-- IME bar -->
<div class="abs" style="left:1730px;top:964px;width:190px;height:26px;background:#fff"></div>
<div class="abs" style="left:1735px;top:966px;width:2px;height:2px;background:#b8b8b8;box-shadow:0 5px 0 #b8b8b8,0 10px 0 #b8b8b8,0 15px 0 #b8b8b8,0 20px 0 #b8b8b8"></div>
<div class="abs" style="left:1745px;top:968px;width:20px;height:20px;border:1px solid #8a8a8a;color:#000;font-size:15px;line-height:17px;text-align:center;font-weight:500">拼</div>
<div class="t" style="left:1773px;top:968px;font-size:19px;line-height:24px;color:#000;font-weight:900">中</div>
<svg class="abs" style="left:1799px;top:969px" width="19" height="19" viewBox="0 0 19 19"><path d="M8 1.500C13 1.500 17.500 5 17.500 10S13 18 8 18C5 18 2.500 16.500 1 14C5 14.500 9 12.500 9.500 9C9.800 6 9 3.500 8 1.500z" fill="#000"/><path d="M7 15.500c2.500 0 5-1.500 6-4-.3 2.800-2.200 4.800-5 5.200z" fill="#fff"/></svg>
<div class="abs" style="left:1825px;top:970px;width:7px;height:7px;border:2px solid #000"></div>
<svg class="abs" style="left:1832px;top:975px" width="9" height="13" viewBox="0 0 9 13"><path d="M2 0.500h6.500v4L4 12.500H1.500L4 5H2z" fill="#000"/></svg>
<div class="t" style="left:1849px;top:967px;font-size:19px;line-height:24px;color:#000;font-weight:900">简</div>
<svg class="abs" style="left:1873px;top:968px" width="20" height="20" viewBox="0 0 20 20"><circle cx="10" cy="10" r="6.200" fill="none" stroke="#000" stroke-width="4.400" stroke-dasharray="3.250 1.620"/><circle cx="10" cy="10" r="4.600" fill="none" stroke="#000" stroke-width="2.400"/></svg>
<div class="abs" style="left:1906px;top:973px;width:7px;height:2px;background:#000"></div>
<svg class="abs" style="left:1906px;top:982px" width="8" height="5" viewBox="0 0 8 5"><path d="M0 0.500h7.500L3.750 4.500z" fill="#000"/></svg>

</body>
</html>
